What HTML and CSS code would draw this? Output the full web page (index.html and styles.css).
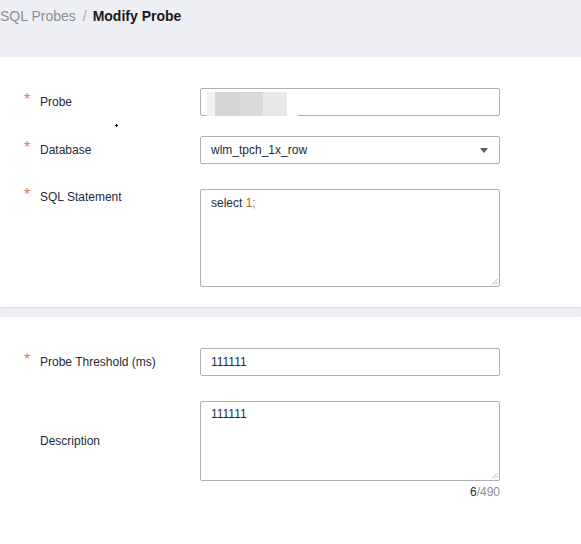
FILE: index.html
```html
<!DOCTYPE html>
<html>
<head>
<meta charset="utf-8">
<link rel="stylesheet" href="styles.css">
</head>
<body>
<div class="crumb-bar">
  <span class="crumb-link">SQL Probes</span><span class="sep">/</span><span class="crumb-cur">Modify Probe</span>
</div>

<section class="card card-top">
  <div class="row">
    <div class="lbl"><span class="star">*</span>Probe</div>
    <div class="field">
      <input class="input" type="text" value="">
      <div class="redact">
        <span class="rb rb1"></span><span class="rb rb2"></span><span class="rb rb3"></span><span class="rb rb4"></span><span class="rb rb5"></span>
      </div>
    </div>
  </div>
  <div class="row row-sel">
    <div class="lbl"><span class="star">*</span>Database</div>
    <div class="field">
      <div class="select">
        <span>wlm_tpch_1x_row</span>
        <svg class="caret" width="8" height="5" viewBox="0 0 8 5"><path d="M0 0H8L4 5Z" fill="#575d6c"/></svg>
      </div>
    </div>
  </div>
  <div class="row row-top row-gap">
    <div class="lbl lbl-top"><span class="star">*</span>SQL Statement</div>
    <div class="field">
      <div class="ta-wrap">
        <div class="ta-text">select <span class="num">1;</span></div>
        <textarea class="textarea ta-sql" aria-label="SQL Statement"></textarea>
        <svg class="grip" width="7" height="7" viewBox="0 0 7 7"><path d="M6.5 1L1 6.5M6.5 4L4 6.5" stroke="#b6b9bf" stroke-width="1"/></svg>
      </div>
    </div>
  </div>
  <span class="cursor-dot"></span>
</section>

<div class="gap"></div>

<section class="card card-bottom">
  <div class="row">
    <div class="lbl"><span class="star">*</span>Probe Threshold (ms)</div>
    <div class="field">
      <input class="input" type="text" value="111111">
    </div>
  </div>
  <div class="row row-desc">
    <div class="lbl lbl-plain">Description</div>
    <div class="field">
      <div class="ta-wrap">
        <textarea class="textarea ta-desc">111111</textarea>
        <svg class="grip" width="7" height="7" viewBox="0 0 7 7"><path d="M6.5 1L1 6.5M6.5 4L4 6.5" stroke="#b6b9bf" stroke-width="1"/></svg>
      </div>
    </div>
  </div>
  <div class="counter"><span class="count-cur">6</span>/490</div>
</section>
</body>
</html>
```

FILE: styles.css
```css
html, body {
  margin: 0;
  padding: 0;
}
body {
  font-family: "Liberation Sans", Arial, sans-serif;
  font-size: 12px;
  color: #252b3a;
  background: #ffffff;
}

.crumb-bar {
  box-sizing: border-box;
  height: 57px;
  background: #eeeff4;
  padding-top: 7px;
  font-size: 14px;
  line-height: 18px;
  white-space: nowrap;
}
.crumb-link {
  color: #8a8e99;
}
.sep {
  color: #a3a6ad;
  margin: 0 6px 0 7px;
}
.crumb-cur {
  font-weight: bold;
  color: #191919;
}

.card {
  background: #ffffff;
  position: relative;
}
.card-top {
  padding: 31px 0 20px;
}
.card-bottom {
  padding: 31px 0 40px;
}

.gap {
  height: 10px;
  background: #eeeff4;
  box-shadow: inset 0 1px 1px rgba(0, 0, 0, 0.1);
}

.row {
  display: flex;
  align-items: center;
}
.row-sel {
  margin-top: 20px;
}
.row-gap {
  margin-top: 25px;
}
.row-top {
  align-items: flex-start;
}
.row-desc {
  margin-top: 25px;
}

.lbl {
  box-sizing: border-box;
  width: 200px;
  padding-left: 24px;
  display: flex;
  align-items: center;
  line-height: 14px;
  white-space: nowrap;
}
.lbl-top {
  padding-top: 1px;
}
.lbl-plain {
  padding-left: 40px;
}
.star {
  width: 16px;
  color: #f66f6a;
  font-size: 16px;
  line-height: 14px;
  position: relative;
  top: -2px;
}

.field {
  width: 300px;
  position: relative;
}

.input {
  display: block;
  box-sizing: border-box;
  width: 300px;
  height: 28px;
  margin: 0;
  border: 1px solid #adb0b8;
  border-radius: 2px;
  padding: 0 10px;
  font-family: inherit;
  font-size: 12px;
  color: #252b3a;
  background: #fff;
  outline: none;
}

.redact {
  position: absolute;
  left: 7px;
  top: 4px;
  height: 24px;
  display: flex;
}
.rb {
  display: block;
  height: 100%;
}
.rb1 { width: 8px; background: #f2f2f3; }
.rb2 { width: 25px; background: #d6d6d7; }
.rb3 { width: 23px; background: #d9dad9; }
.rb4 { width: 24px; background: #e8e8e9; }
.rb5 { width: 11px; background: #ffffff; }

.select {
  box-sizing: border-box;
  width: 300px;
  height: 28px;
  border: 1px solid #adb0b8;
  border-radius: 2px;
  padding: 0 10px;
  display: flex;
  align-items: center;
  justify-content: space-between;
  color: #252b3a;
}
.caret {
  display: block;
  margin-right: 1px;
}

.ta-wrap {
  position: relative;
}
.ta-text {
  position: absolute;
  left: 11px;
  top: 6px;
  line-height: 16px;
  pointer-events: none;
}
.num {
  color: #b8661b;
}
.grip {
  position: absolute;
  right: 2px;
  bottom: 2px;
  display: block;
}

.textarea {
  display: block;
  box-sizing: border-box;
  width: 300px;
  margin: 0;
  border: 1px solid #adb0b8;
  border-radius: 2px;
  padding: 4px 10px;
  font-family: inherit;
  font-size: 12px;
  line-height: 16px;
  color: #252b3a;
  background: #fff;
  outline: none;
  resize: none;
}
.ta-sql {
  height: 98px;
}
.ta-desc {
  height: 80px;
}

.counter {
  box-sizing: border-box;
  width: 500px;
  text-align: right;
  line-height: 18px;
  margin-top: 2px;
  color: #8a8e99;
}
.count-cur {
  color: #252b3a;
}

.cursor-dot {
  position: absolute;
  left: 115px;
  top: 67px;
  width: 3px;
  height: 3px;
}
.cursor-dot::before,
.cursor-dot::after {
  content: "";
  position: absolute;
  background: #000;
}
.cursor-dot::before {
  left: 1px;
  top: 0;
  width: 1px;
  height: 3px;
}
.cursor-dot::after {
  left: 0;
  top: 1px;
  width: 3px;
  height: 1px;
}
```
